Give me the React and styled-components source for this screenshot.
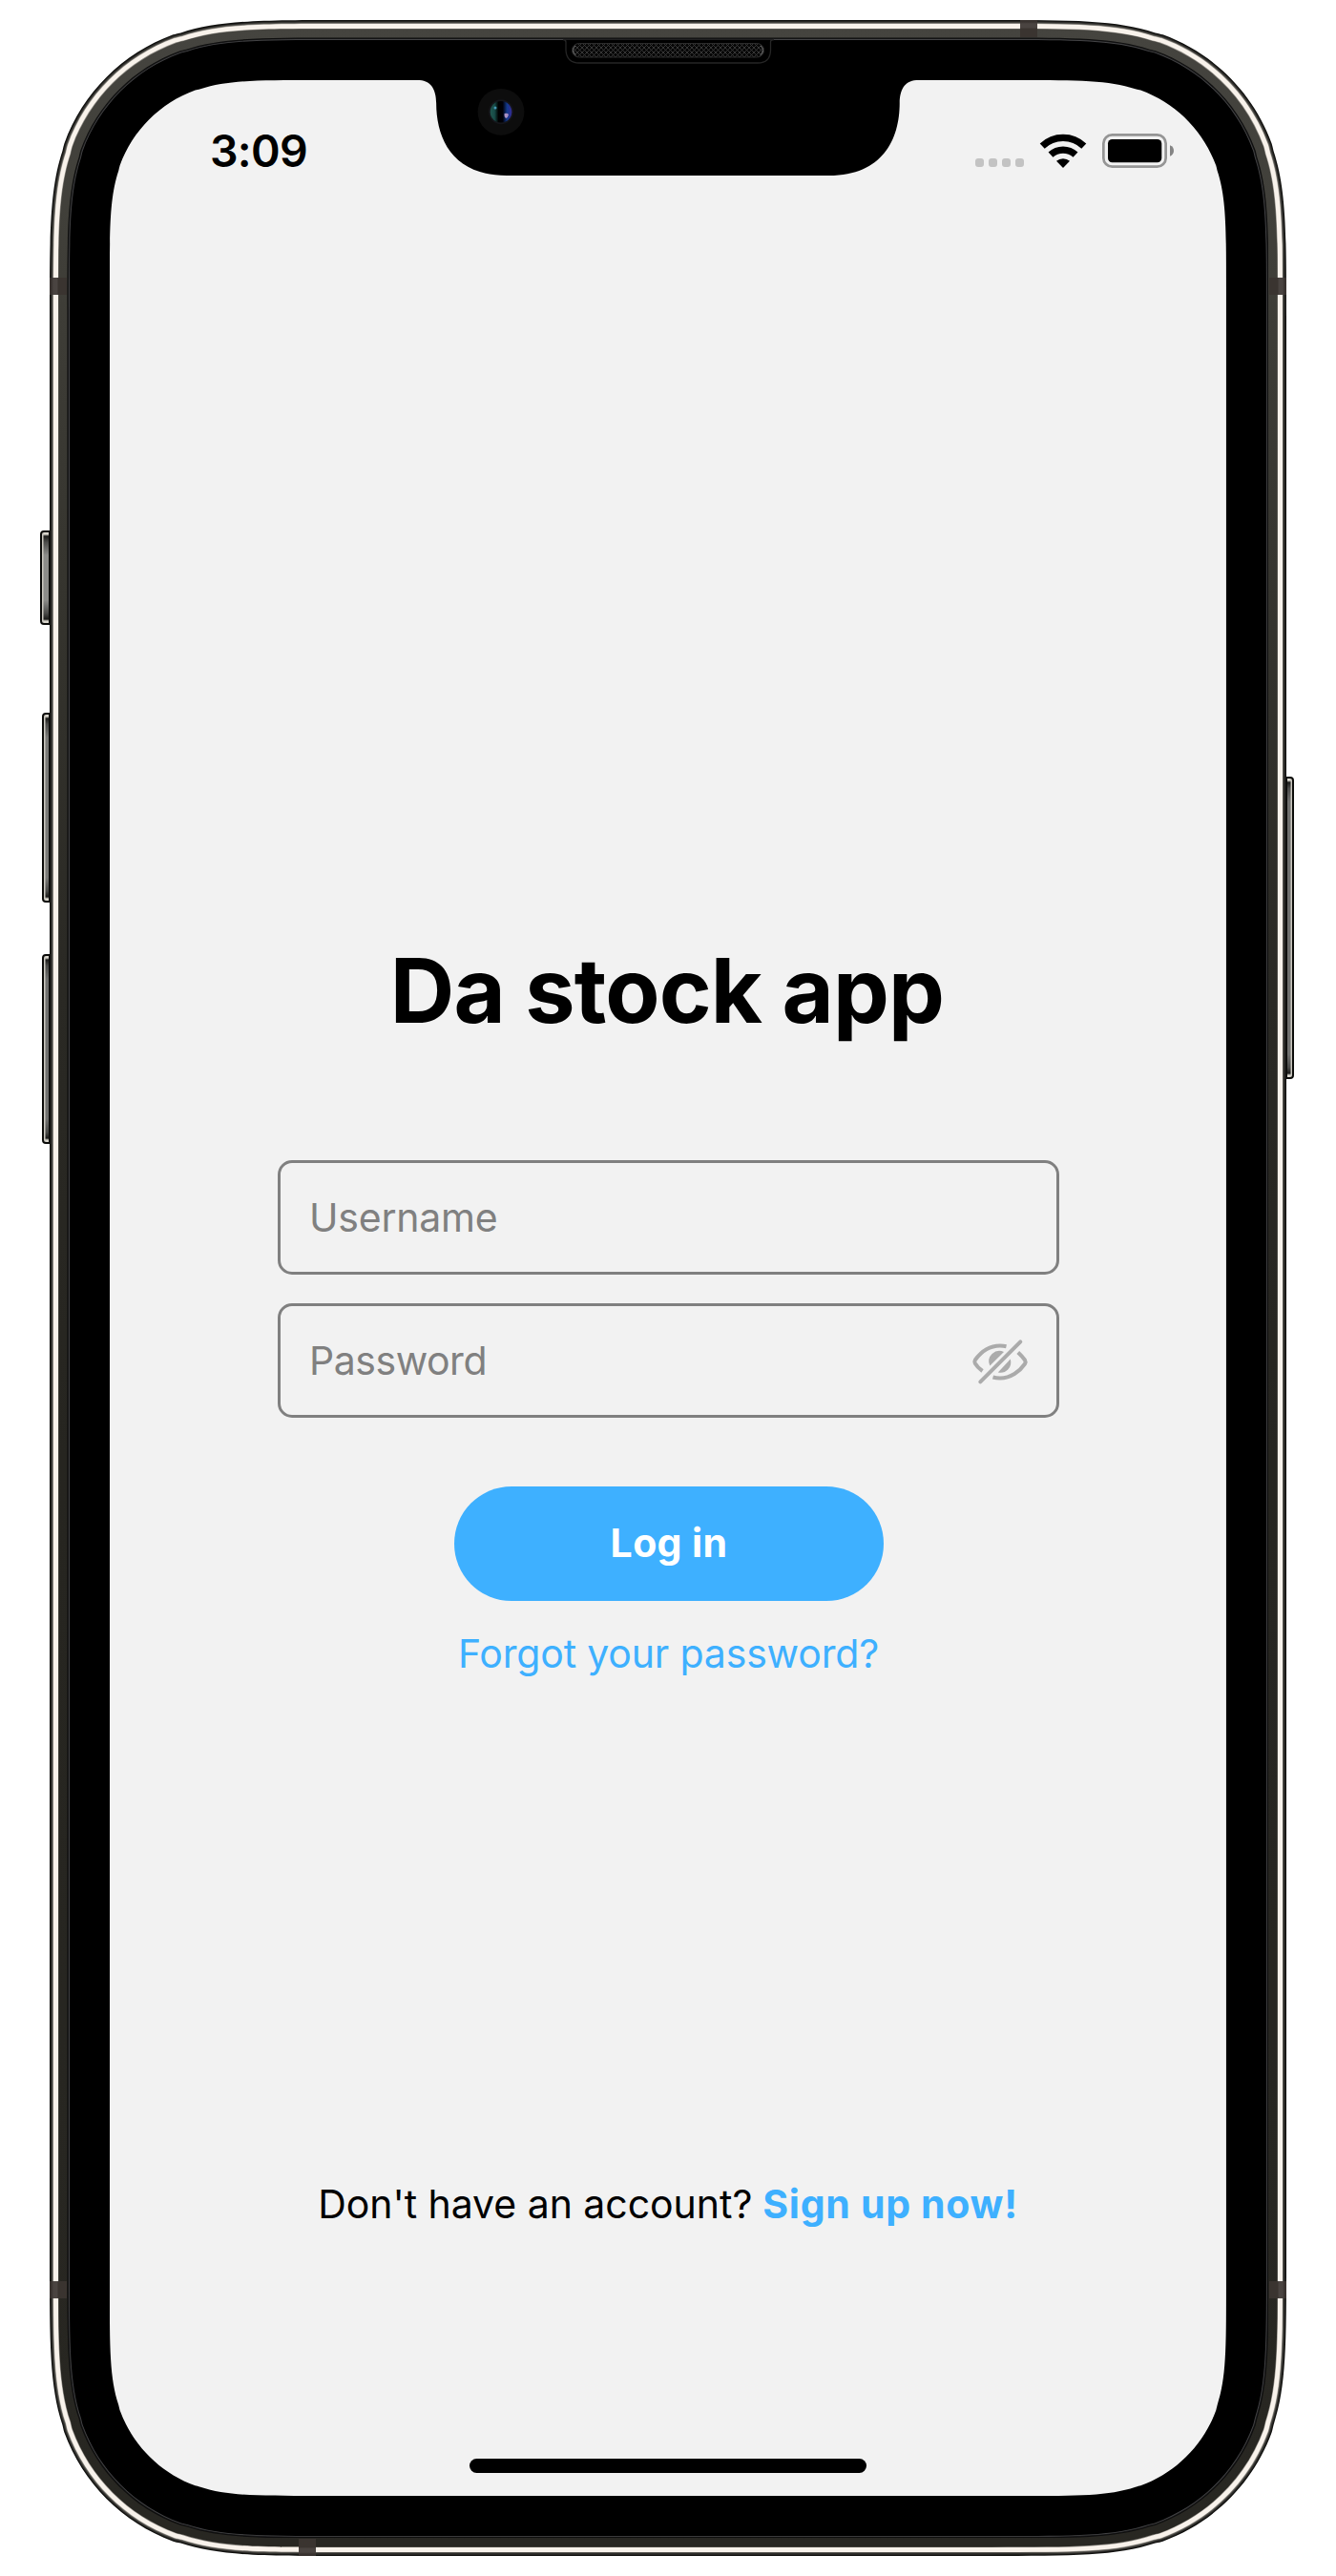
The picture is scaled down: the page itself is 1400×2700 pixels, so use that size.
import React from "react";
import styled, { createGlobalStyle } from "styled-components";

const GlobalStyle = createGlobalStyle`
  *, *::before, *::after { box-sizing: border-box; }
  body {
    margin: 0;
    background: #ffffff;
    font-family: Inter, "Liberation Sans", sans-serif;
    -webkit-font-smoothing: antialiased;
  }
`;

/* Continuous-curvature rounded rectangle, as used for iPhone hardware. */
const squircle = (w, h, r) => {
  const corner = [
    [1.52866, 0],
    [1.08849, 0], [0.86841, 0], [0.66993, 0.0655],
    [0.65, 0.07], [0.644, 0.0715], [0.63149, 0.07491],
    [0.37282, 0.16906], [0.16906, 0.37282], [0.07491, 0.63149],
    [0.0715, 0.644], [0.07, 0.65], [0.0655, 0.66993],
    [0, 0.86841], [0, 1.08849], [0, 1.52866],
  ];
  const place = (pts, fx, fy) =>
    pts.map(([x, y]) => [fx ? w - x * r : x * r, fy ? h - y * r : y * r].map((n) => n.toFixed(2)).join(" "));
  const rev = [...corner].reverse();
  const runs = [
    place(rev, false, false),
    place(corner, true, false),
    place(rev, true, true),
    place(corner, false, true),
  ];
  return runs.map((p, i) => `${i ? "L" : "M"}${p[0]} C${p.slice(1).join(" ")}`).join(" ") + " Z";
};

const RAIL = "linear-gradient(180deg, #45443f 0, #3f3e38 260px, #35342e 600px, #2a2924 1000px, #262520 1500px, #282722 100%)";

const layers = [
  { size: 1.3, fill: "#11110f" },
  { size: 1.2, fill: "#2f2e2b" },
  { size: 1, fill: "#565550" },
  { size: 0.5, fill: "#aaa69f" },
  { size: 4.7, fill: "#f8f2eb" },
  { size: 0.6, fill: "#918e88" },
  { size: 9.2, fill: RAIL },
  { size: 1, fill: "#0d0d0d" },
  { size: 0.6, fill: "#1d1d1e" },
  { size: 0.9, fill: "#444446" },
  { size: 42, fill: "#000000" },
];

const Page = styled.div`
  width: 1400px;
  height: 2700px;
  padding: 21px 52px;
  overflow: hidden;
`;

const Device = styled.div`
  position: relative;
  width: 1296px;
  height: 2658px;
`;

const Ring = styled.div`
  position: relative;
  width: ${(p) => p.$w}px;
  height: ${(p) => p.$h}px;
  padding: ${(p) => p.$size}px;
  background: ${(p) => p.$fill};
  clip-path: path("${(p) => squircle(p.$w, p.$h, p.$r)}");
`;

const SideButton = styled.div`
  position: absolute;
  top: ${(p) => p.$top}px;
  ${(p) => (p.$right ? "left: 1295px;" : `left: ${-p.$depth}px;`)}
  width: ${(p) => p.$depth + 1}px;
  height: ${(p) => p.$length}px;
  border: 2px solid #0b0b09;
  border-radius: ${(p) => (p.$right ? "0 4px 4px 0" : "4px 0 0 4px")};
  background: linear-gradient(180deg, #d9d6cd 0 2px, #1c1c1a 4px, #4a4a48 10px, ${(p) => p.$tone} 24px,
    ${(p) => p.$tone} calc(100% - 24px), #4a4a48 calc(100% - 10px), #1c1c1a calc(100% - 4px), #d9d6cd calc(100% - 2px));
  box-shadow: inset ${(p) => (p.$right ? "-1.500px" : "1.500px")} 0 0 #cbc8c0;
`;

const Band = styled.div`
  position: absolute;
  left: ${(p) => p.$x}px;
  top: ${(p) => p.$y}px;
  width: 18px;
  height: 18px;
  background: linear-gradient(${(p) => p.$dir}, #38322f 0 2px, #4a4441 4px 8px, #3a3430 9px);
`;

const Screen = styled.main`
  position: relative;
  display: flex;
  flex-direction: column;
  align-items: center;
  width: 1170px;
  height: 2532px;
  background: #f2f2f2;
  clip-path: path("${squircle(1170, 2532, 142)}");
`;

const Notch = styled.div`
  position: absolute;
  top: 0;
  left: 323px;
  width: 524px;
  height: 100px;
  background: #000;
  clip-path: path("M0 0 C14 0 19 10 19.2 24 C19.2 62 37 100 93 100 L431 100 C487 100 504.800 62 504.800 24 C505 10 510 0 524 0 Z");
`;

const Sensors = styled.svg`
  position: absolute;
  top: 17px;
  left: 428px;
  width: 400px;
  height: 110px;
`;

const StatusBar = styled.header`
  display: flex;
  justify-content: space-between;
  align-items: center;
  width: 100%;
  height: 148px;
  padding: 0 55px 0 105px;
`;

const Time = styled.time`
  font-size: 46.500px;
  line-height: 60px;
  font-weight: 600;
  letter-spacing: -0.7px;
  color: #000;
`;

const StatusIcons = styled.div`
  display: flex;
  align-items: center;
`;

const Cellular = styled.div`
  display: flex;
  gap: 5px;
  padding-top: 25px;
  margin-right: 16px;
`;

const Dot = styled.span`
  width: 9px;
  height: 9px;
  border-radius: 3px;
  background: #c3c3c3;
`;

const WifiIcon = styled.svg`
  width: 50px;
  height: 38px;
  margin-right: 16px;
`;

const BatteryIcon = styled.svg`
  width: 75px;
  height: 36px;
`;

const Title = styled.h1`
  margin: 748px 2px 0 0;
  font-size: 93.500px;
  line-height: 116px;
  font-weight: 700;
  letter-spacing: -0.850px;
  color: #000;
`;

const Form = styled.form`
  display: flex;
  flex-direction: column;
  align-items: center;
  gap: 30px;
  width: 819px;
  margin: 120px 0 0 1px;
`;

const Field = styled.label`
  display: flex;
  align-items: center;
  width: 100%;
  height: 120px;
  padding: 0 30px;
  border: 3px solid #808080;
  border-radius: 15px;
`;

const Input = styled.input`
  flex: 1;
  min-width: 0;
  height: 100%;
  padding: 0;
  border: 0;
  outline: 0;
  background: transparent;
  font: 400 41px Inter, "Liberation Sans", sans-serif;
  letter-spacing: ${(p) => p.$track}px;
  color: #000;
  &::placeholder { color: #808080; opacity: 1; }
`;

const EyeIcon = styled.svg`
  width: 60px;
  height: 60px;
  margin-right: -1px;
`;

const LoginButton = styled.button`
  width: 450px;
  height: 120px;
  margin: 42px 0 0 1px;
  padding: 0 0 2px;
  border: 0;
  border-radius: 60px;
  background: #3eb0ff;
  color: #fff;
  font: 700 41px Inter, "Liberation Sans", sans-serif;
  letter-spacing: 0.350px;
`;

const TextLink = styled.a`
  font-size: 41px;
  line-height: 50px;
  font-weight: ${(p) => (p.$bold ? 700 : 400)};
  letter-spacing: ${(p) => p.$track}px;
  white-space: nowrap;
  color: #3eb0ff;
`;

const SignUp = styled.p`
  display: flex;
  gap: 11px;
  margin: auto 0 242px;
  font-size: 41px;
  line-height: 50px;
  white-space: nowrap;
  color: #000;
`;

const Prompt = styled.span`
  letter-spacing: -0.040px;
`;

const HomeIndicator = styled.div`
  width: 416px;
  height: 15px;
  margin-bottom: 24px;
  flex: none;
  border-radius: 8px;
  background: #000;
`;

const Wifi = () => (
  <WifiIcon viewBox="0 0 50 38">
    <g fill="none" stroke="#000" strokeWidth="7.2">
      <path d="M3.200 14.200 A31.500 31.500 0 0 1 46.800 14.200" />
      <path d="M12 23.200 A19 19 0 0 1 38 23.200" />
    </g>
    <path d="M25 37 L18 29.800 A10.500 10.500 0 0 1 32 29.800 Z" />
  </WifiIcon>
);

const Battery = () => (
  <BatteryIcon viewBox="0 0 75 36">
    <rect x="1.35" y="1.35" width="65.3" height="33.3" rx="9" fill="none" stroke="#959595" strokeWidth="2.7" />
    <rect x="6" y="6" width="56.300" height="24.300" rx="4.500" />
    <path d="M71 12.300 C73.800 13.500 75 15.500 75 18 C75 20.500 73.800 22.500 71 23.700 Z" fill="#858585" />
  </BatteryIcon>
);

const EyeOff = () => (
  <EyeIcon viewBox="0 0 60 60">
    <g fill="none" stroke="#ababab" strokeWidth="4" strokeLinecap="round" strokeLinejoin="round">
      <path d="M11.500 41 C8 38.500 5.300 35.600 3.800 33 Q2.800 31 3.800 29.500 C9.500 21.500 18.500 14.500 30 14.500 Q33.500 14.500 36.500 15.200" strokeLinecap="butt" />
      <path d="M22.500 47.500 Q26 48.500 30 48.500 C41 48.500 50.500 41.500 56 33.500 Q57.200 31.500 56 29.500 C53.800 26.500 51.500 24 48.800 21.500" strokeLinecap="butt" />
      <path d="M9.300 52.300 L51.300 10.300" />
    </g>
    <path d="M19.300 35.500 A11 11 0 0 1 34 21 Z" fill="#ababab" />
    <path d="M40.800 28.500 A11 11 0 0 1 27.800 42.500 Z" fill="#ababab" />
  </EyeIcon>
);

const FrontSensors = () => (
  <Sensors viewBox="480 38 400 110">
    <defs>
      <pattern id="mesh" width="5" height="5" patternUnits="userSpaceOnUse">
        <rect width="5" height="5" fill="#070707" />
        <path d="M0 0 L5 5 M5 0 L0 5" stroke="#3b3b3b" strokeWidth="0.9" />
      </pattern>
      <linearGradient id="lens">
        <stop offset="0" stopColor="#20564e" />
        <stop offset="0.2" stopColor="#174c48" />
        <stop offset="0.38" stopColor="#000" />
        <stop offset="0.58" stopColor="#000008" />
        <stop offset="0.78" stopColor="#12398c" />
        <stop offset="1" stopColor="#352b94" />
      </linearGradient>
    </defs>
    <path d="M590 41.500 Q593 41.500 593 44 V53 Q594 66 607 66 H794 Q807 66 807.500 53 V44 Q807.500 41.500 811 41.500" fill="#000" stroke="#262626" strokeWidth="1.300" />
    <rect x="599.500" y="45.500" width="201" height="14.500" rx="7.250" fill="url(#mesh)" stroke="#2b2b2b" />
    <path d="M603 48 Q598 52.500 603 57.500 M797 48 Q802 52.500 797 57.500" fill="none" stroke="#707070" strokeWidth="1" />
    <circle cx="525" cy="117.300" r="24.400" fill="#0d0d0d" />
    <circle cx="525" cy="117.300" r="13" fill="#15151a" />
    <circle cx="525" cy="117.300" r="11.300" fill="url(#lens)" />
    <circle cx="519" cy="113" r="1.500" fill="#4697b5" />
    <path d="M528.500 119 q3-1 4.500 1 q-.5 3-3 4 q-2-2-1.500-5" fill="#a990c4" />
  </Sensors>
);

const screen = (
  <Screen>
    <StatusBar>
      <Time>3:09</Time>
      <StatusIcons>
        <Cellular>
          {[0, 1, 2, 3].map((i) => <Dot key={i} />)}
        </Cellular>
        <Wifi />
        <Battery />
      </StatusIcons>
    </StatusBar>
    <Notch />
    <Title>Da stock app</Title>
    <Form onSubmit={(e) => e.preventDefault()}>
      <Field>
        <Input placeholder="Username" $track={-0.2} />
      </Field>
      <Field>
        <Input type="password" placeholder="Password" $track={-0.45} />
        <EyeOff />
      </Field>
      <LoginButton>Log in</LoginButton>
      <TextLink $track={-0.17}>Forgot your password?</TextLink>
    </Form>
    <SignUp>
      <Prompt>Don't have an account?</Prompt>
      <TextLink $bold $track={0.7}>Sign up now!</TextLink>
    </SignUp>
    <HomeIndicator />
  </Screen>
);

const buildFrame = (index = 0, offset = 0) => {
  if (index === layers.length) return screen;
  const { size, fill } = layers[index];
  return (
    <Ring $w={1296 - offset * 2} $h={2658 - offset * 2} $r={205 - offset} $size={size} $fill={fill}>
      {buildFrame(index + 1, offset + size)}
    </Ring>
  );
};

export default function App() {
  return (
    <>
      <GlobalStyle />
      <Page>
        <Device>
          <SideButton $top={535} $length={99} $depth={10} $tone="#8c8c89" />
          <SideButton $top={725.5} $length={199} $depth={8} $tone="#7a7a77" />
          <SideButton $top={979} $length={199} $depth={8} $tone="#70706e" />
          <SideButton $right $top={793} $length={317} $depth={8} $tone="#70706e" />
          {buildFrame()}
          <Band $x={0} $y={270} $dir="90deg" />
          <Band $x={0} $y={2370} $dir="90deg" />
          <Band $x={1278} $y={270} $dir="270deg" />
          <Band $x={1278} $y={2370} $dir="270deg" />
          <Band $x={1017} $y={0} $dir="180deg" />
          <Band $x={261} $y={2640} $dir="0deg" />
          <FrontSensors />
        </Device>
      </Page>
    </>
  );
}
